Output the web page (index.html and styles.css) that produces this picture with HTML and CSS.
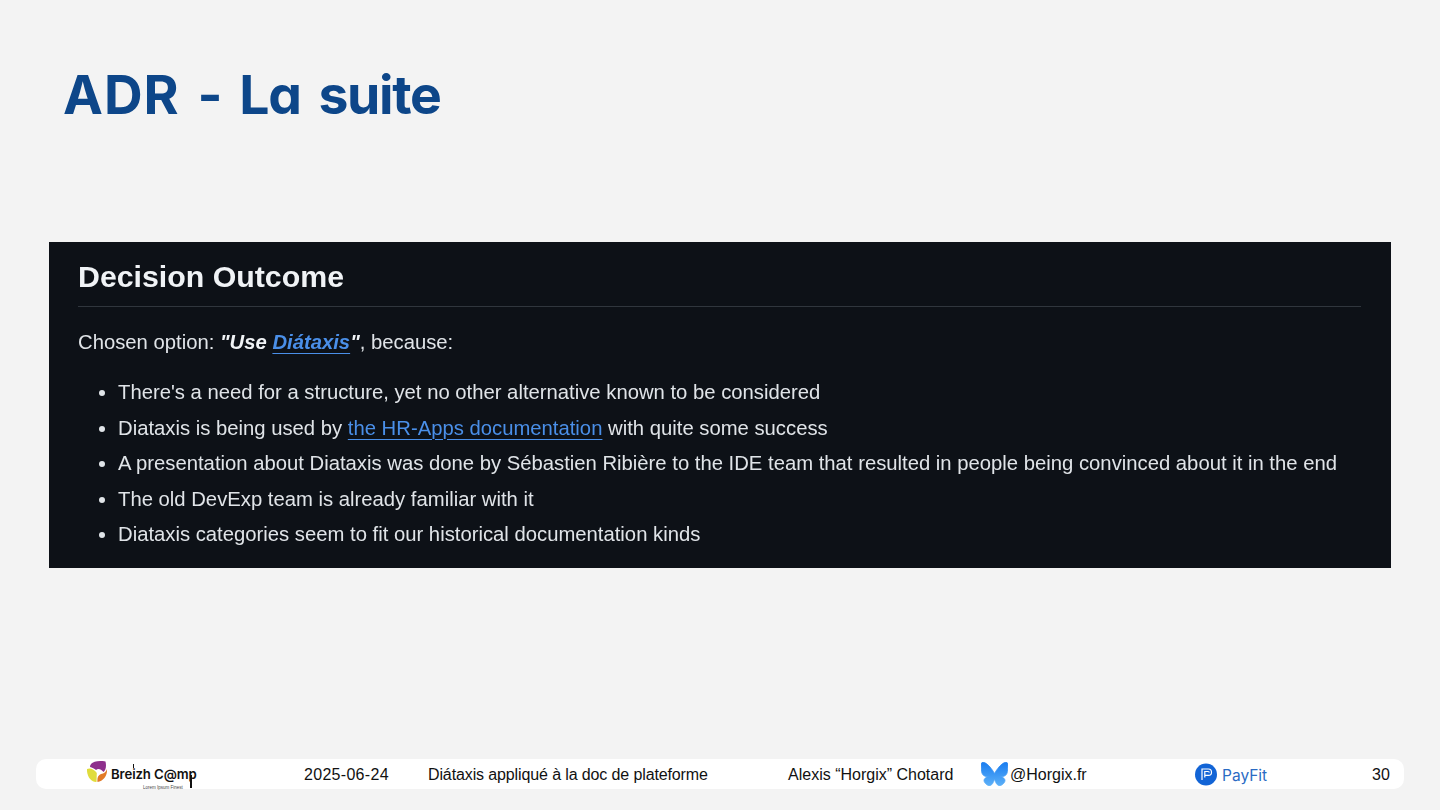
FILE: index.html
```html
<!DOCTYPE html>
<html lang="fr">
<head>
<meta charset="utf-8">
<title>ADR - La suite</title>
<link rel="stylesheet" href="styles.css">
</head>
<body>
<main class="slide">
  <h1 class="title"><span class="title-wide">ADR</span> - La suite</h1>
  <section class="shot">
    <h2 class="shot-heading">Decision Outcome</h2>
    <p class="shot-lead">Chosen option: <em class="strong">"Use <a class="link" href="#">Diátaxis</a>"</em>, because:</p>
    <ul class="shot-list">
      <li>There's a need for a structure, yet no other alternative known to be considered</li>
      <li>Diataxis is being used by <a class="link" href="#">the HR-Apps documentation</a> with quite some success</li>
      <li>A presentation about Diataxis was done by Sébastien Ribière to the IDE team that resulted in people being convinced about it in the end</li>
      <li>The old DevExp team is already familiar with it</li>
      <li>Diataxis categories seem to fit our historical documentation kinds</li>
    </ul>
  </section>
  <footer class="footer">
    <div class="brand">
      <svg class="brand-mark" viewBox="0 0 20 22" width="20" height="22">
        <path d="M3 6C3 1 10 -1 18.500 .5C19.500 5 19 9 16.500 11C14 8 11 7 9 9C7.500 7.500 5 6.500 3 6Z" fill="#8e2f8c"/>
        <path d="M0 8C3 6.500 7 8 9.800 12L9.500 21C5 21.500 -.5 16 0 8Z" fill="#e0dc3c"/>
        <path d="M20 8C20.500 14 17 20 10.500 21C10 17 11 14 14 13C17 12.500 19 11 20 8Z" fill="#e27a26"/>
      </svg>
      <span class="brand-name">Bre<span class="brand-i">i</span>zh C@m<span class="brand-p">p</span></span>
      <span class="brand-sub">Lorem Ipsum Finest</span>
    </div>
    <span class="foot-date">2025-06-24</span>
    <span class="foot-talk">Diátaxis appliqué à la doc de plateforme</span>
    <span class="foot-author">Alexis “Horgix” Chotard</span>
    <span class="foot-social">
      <svg class="bsky" viewBox="0 0 28 25" width="27" height="24">
        <defs><linearGradient id="bs" x1="0" y1="0" x2="0" y2="1"><stop offset="0" stop-color="#1a7df0"/><stop offset="1" stop-color="#5cb0f8"/></linearGradient></defs>
        <path d="M6 2C9.200 4.400 12.600 9.200 14 12C15.400 9.200 18.800 4.400 22 2C24.300 .3 28 -1 28 3.200C28 4 27.500 10.200 27.200 11.200C26.200 14.800 22.600 15.700 19.400 15.200C25 16.100 26.400 19.300 23.400 22.400C17.600 28.300 15 20.900 14.400 19.100C14.200 18.600 14 18.300 14 18.300C14 18.300 13.800 18.600 13.600 19.100C13 20.900 10.400 28.300 4.600 22.400C1.600 19.300 3 16.100 8.600 15.200C5.400 15.700 1.800 14.800 .8 11.200C.5 10.200 0 4 0 3.200C0 -1 3.700 .3 6 2Z" fill="url(#bs)" stroke="url(#bs)" stroke-width=".8"/>
      </svg>
      <span>@Horgix.fr</span>
    </span>
    <span class="payfit">
      <svg class="payfit-mark" viewBox="0 0 22 23" width="22" height="23">
        <circle cx="11" cy="11.500" r="11" fill="#1264d6"/>
        <path d="M7 17V6H13.500C15.500 6 16.500 7.300 16.500 9.200C16.500 11.100 15.500 12.400 13.500 12.400H10.300M9.800 14.500V8.500H13C14 8.500 14.300 8.900 14.300 9.400" fill="none" stroke="#fff" stroke-width="1.200"/>
      </svg>
      <span class="payfit-name">PayFit</span>
    </span>
    <span class="foot-page">30</span>
  </footer>
</main>
</body>
</html>
```
FILE: styles.css
```css
* { box-sizing: border-box; }
html, body { margin: 0; padding: 0; }
body { background: #f3f3f3; font-family: "Liberation Sans", Arial, sans-serif; }
.slide { width: 1440px; height: 810px; display: flex; flex-direction: column; overflow: hidden; padding-top: 59px; }
.title { margin: 0 0 0 63px; height: 71px; font-family: Inter, sans-serif; font-feature-settings: "cv11"; font-weight: 700; font-size: 53.500px; line-height: 71px; letter-spacing: -1.300px; word-spacing: 6.500px; color: #0d4689; }
.title-wide { letter-spacing: 1px; }
.shot { margin: 112px 49px 0; width: 1342px; height: 326px; background: #0d1117; color: #e0e4e8; padding: 15px 30px 0 29px; font-size: 20.280px; }
.shot-heading { margin: 0; height: 50px; line-height: 40px; font-size: 30.300px; font-weight: 700; color: #f0f3f6; border-bottom: 1px solid #30363d; }
.shot-heading, .shot-lead, .shot-list { filter: blur(.35px); }
.shot-lead { margin: 21px 0 0; line-height: 28px; height: 28px; }
.strong { font-weight: 700; font-style: italic; color: #f0f3f6; }
.link { color: #4a8fe8; text-decoration: underline; text-underline-offset: 4px; text-decoration-thickness: 1px; }
.shot-list { margin: 22px 0 0; padding: 0 0 0 40px; list-style: disc; }
.shot-list li { height: 35.500px; line-height: 28px; }
.footer { margin: 191px 36px 0; width: 1368px; height: 30px; padding-top: 2px; background: #fff; border-radius: 10px; display: flex; align-items: center; font-size: 16px; color: #111; }
.footer svg { margin-top: -2px; flex: none; }
.footer .brand-mark { margin-top: -6px; }
.brand { width: 268px; padding-left: 51px; display: flex; align-items: center; height: 100%; position: relative; }
.brand-name { margin: -2px 0 0 4px; font-family: Inter, sans-serif; font-size: 13.200px; font-weight: 600; letter-spacing: -.1px; color: #111; white-space: nowrap; }
.brand-i { position: relative; }
.brand-i::before { content: ""; position: absolute; left: 1px; top: -2px; width: 1px; height: 4px; background: #111; }
.brand-p { position: relative; }
.brand-p::after { content: ""; position: absolute; left: 1px; top: 9px; width: 2px; height: 13px; background: #111; }
.brand-sub { position: absolute; left: 107px; top: 24px; font-size: 4.500px; color: #444; white-space: nowrap; }
.foot-date { width: 124px; letter-spacing: .3px; }
.foot-talk { width: 360px; letter-spacing: -.12px; }
.foot-author { width: 193px; }
.foot-social { width: 214px; display: flex; align-items: center; gap: 2px; }
.payfit { width: 177px; display: flex; align-items: center; gap: 5px; }
.payfit-name { font-family: Inter, sans-serif; font-size: 15.500px; color: #2a6bc4; }
.foot-page { color: #111; }
```
